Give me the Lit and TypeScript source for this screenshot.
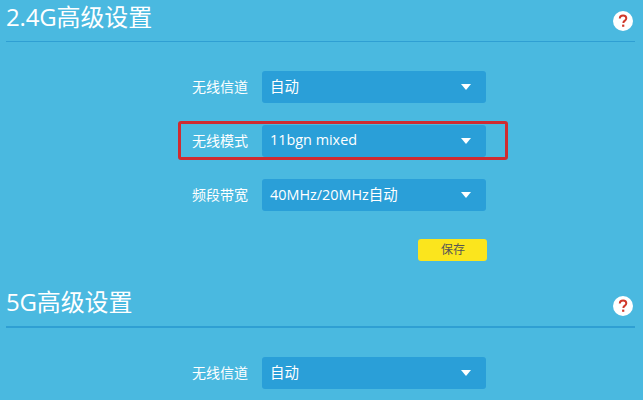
import { LitElement, html, css, TemplateResult } from 'lit';
import { customElement } from 'lit/decorators.js';

const helpIcon = html`
  <svg class="help" viewBox="0 0 20 20" width="20" height="20" aria-hidden="true">
    <circle cx="10" cy="10" r="10" fill="#fff"></circle>
    <path d="M6.8 7.6c0-2 1.4-3.2 3.3-3.2s3.2 1.1 3.2 2.8c0 1.4-.8 2-1.7 2.7-.8.6-1.2 1-1.2 2" fill="none" stroke="#d0392b" stroke-width="2"></path>
    <rect x="9.1" y="13.6" width="2.2" height="2.2" fill="#d0392b"></rect>
  </svg>
`;

@customElement('app-root')
export class AppRoot extends LitElement {
  static styles = css`
    :host {
      display: block;
      width: 643px;
      height: 400px;
      overflow: hidden;
      background: #4ab9e0;
      color: #fff;
      font-family: 'Open Sans', 'Noto Sans CJK SC', sans-serif;
    }

    .head {
      display: flex;
      justify-content: space-between;
      margin: 0 8px 0 6px;
      border-bottom: 1px solid #2f9fd3;
    }
    .head h2 {
      margin: 0;
      font-size: 24px;
      font-weight: 400;
      line-height: 34px;
      letter-spacing: -0.15px;
    }
    .head-first {
      height: 41px;
      align-items: flex-start;
    }
    .head-first .help {
      margin-top: 11px;
    }
    .head-second {
      height: 66px;
      align-items: flex-end;
      border-bottom-width: 2px;
      margin-top: -1px;
    }
    .head-second h2 {
      margin-bottom: 7px;
    }
    .head-second .help {
      margin-bottom: 10px;
    }
    .help {
      margin-right: 2px;
      flex: none;
    }

    .form {
      display: flex;
      flex-direction: column;
      gap: 22px;
      padding: 29px 0 0 178px;
    }
    .row {
      position: relative;
      display: flex;
      align-items: center;
      gap: 14px;
      height: 32px;
    }
    .label {
      width: 70px;
      padding-bottom: 3px;
      text-align: right;
      font-size: 14px;
    }
    .select {
      display: flex;
      align-items: center;
      justify-content: space-between;
      box-sizing: border-box;
      width: 224px;
      height: 32px;
      padding: 0 15px 0 8px;
      border-radius: 3px;
      background: #2a9fd8;
      font-size: 14.4px;
    }
    .value {
      padding-bottom: 3px;
    }
    .arrow {
      width: 0;
      height: 0;
      border-left: 5px solid transparent;
      border-right: 5px solid transparent;
      border-top: 6px solid #fff;
    }
    .highlight {
      position: absolute;
      left: 0;
      top: -4px;
      box-sizing: border-box;
      width: 330px;
      height: 39px;
      border: 3px solid #cf2b31;
      border-radius: 3px;
    }

    .actions {
      display: flex;
      padding: 28px 0 0 418px;
    }
    .save {
      width: 69px;
      height: 22px;
      padding: 0 0 2px 1px;
      border: 0;
      border-radius: 3px;
      background: #fbe51d;
      color: #555;
      font: inherit;
      font-size: 12px;
    }
  `;

  private renderRow(label: string, value: string, marked = false): TemplateResult {
    return html`
      <div class="row">
        <span class="label">${label}</span>
        <div class="select">
          <span class="value">${value}</span>
          <span class="arrow"></span>
        </div>
        ${marked ? html`<div class="highlight"></div>` : ''}
      </div>
    `;
  }

  render(): TemplateResult {
    return html`
      <div class="head head-first">
        <h2>2.4G高级设置</h2>
        ${helpIcon}
      </div>
      <div class="form">
        ${this.renderRow('无线信道', '自动')}
        ${this.renderRow('无线模式', '11bgn mixed', true)}
        ${this.renderRow('频段带宽', '40MHz/20MHz自动')}
      </div>
      <div class="actions"><button class="save">保存</button></div>

      <div class="head head-second">
        <h2>5G高级设置</h2>
        ${helpIcon}
      </div>
      <div class="form">${this.renderRow('无线信道', '自动')}</div>
    `;
  }
}

declare global {
  interface HTMLElementTagNameMap {
    'app-root': AppRoot;
  }
}
